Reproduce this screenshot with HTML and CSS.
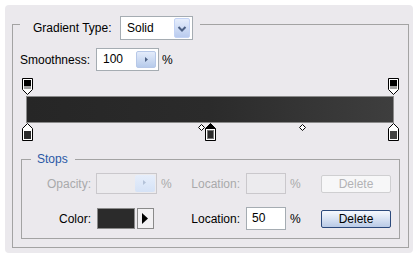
FILE: index.html
```html
<!DOCTYPE html>
<html lang="en">
<head>
  <meta charset="UTF-8">
  <title>Gradient Editor</title>
  <link rel="stylesheet" href="styles.css">
</head>
<body>
  <div class="panel">
    <div class="group">
      <div class="group-head">
        <span class="head-label">Gradient Type:</span>
        <div class="select">
          <span class="select-val">Solid</span>
          <span class="drop">
            <svg width="14" height="19" viewBox="0 0 14 19"><path d="M3.5 8 L7 11.5 L10.5 8" fill="none" stroke="#4d6185" stroke-width="2"/></svg>
          </span>
        </div>
      </div>

      <div class="smooth-row">
        <span class="smooth-label">Smoothness:</span>
        <div class="spin">
          <span class="spin-val">100</span>
          <span class="spin-btn">
            <svg width="18" height="15" viewBox="0 0 18 15"><path d="M8 5 L11 7.5 L8 10 Z" fill="#4d6185"/></svg>
          </span>
        </div>
        <span class="pct">%</span>
      </div>

      <div class="editor">
        <span class="stop top" style="--pos: 0">
          <svg width="11" height="17" viewBox="0 0 11 17"><path d="M0.5 0.5H10.5V11.5L5.5 16.5L0.5 11.5Z" fill="#fff" stroke="#000"/><rect x="2" y="2" width="7" height="6" fill="#000"/><rect x="2" y="8" width="7" height="3" fill="#a0a0a0"/></svg>
        </span>
        <span class="stop top" style="--pos: 1">
          <svg width="11" height="17" viewBox="0 0 11 17"><path d="M0.5 0.5H10.5V11.5L5.5 16.5L0.5 11.5Z" fill="#fff" stroke="#000"/><rect x="2" y="2" width="7" height="6" fill="#000"/><rect x="2" y="8" width="7" height="3" fill="#a0a0a0"/></svg>
        </span>

        <div class="bar"></div>

        <span class="stop bottom" style="--pos: 0">
          <svg width="11" height="18" viewBox="0 0 11 18"><path d="M5.5 0.5L10.5 5.5V17.5H0.5V5.5Z" fill="#fff" stroke="#000"/><rect x="2" y="8" width="7" height="8" fill="#2b2b2b"/></svg>
        </span>
        <span class="stop bottom" style="--pos: 0.5">
          <svg width="11" height="18" viewBox="0 0 11 18"><path d="M5.5 0.5L10.5 5.5V17.5H0.5V5.5Z" fill="#000" stroke="#000"/><rect x="1" y="6" width="9" height="11" fill="#fff"/><rect x="2" y="7" width="7" height="9" fill="#777"/><rect x="3" y="8" width="5" height="7" fill="#2b2b2b"/></svg>
        </span>
        <span class="stop bottom" style="--pos: 1">
          <svg width="11" height="18" viewBox="0 0 11 18"><path d="M5.5 0.5L10.5 5.5V17.5H0.5V5.5Z" fill="#fff" stroke="#000"/><rect x="2" y="8" width="7" height="8" fill="#424242"/></svg>
        </span>

        <span class="mid" style="--pos: 0.475">
          <svg width="7" height="7" viewBox="0 0 7 7"><path d="M3.5 0.5L6.5 3.5L3.5 6.5L0.5 3.5Z" fill="#fff" stroke="#000"/></svg>
        </span>
        <span class="mid" style="--pos: 0.75">
          <svg width="7" height="7" viewBox="0 0 7 7"><path d="M3.5 0.5L6.5 3.5L3.5 6.5L0.5 3.5Z" fill="#fff" stroke="#000"/></svg>
        </span>
      </div>

      <div class="stops">
        <div class="stops-head">Stops</div>
        <div class="stops-grid">
          <span class="cell-label off">Opacity:</span>
          <div class="field">
            <div class="spin off small">
              <span class="spin-val"></span>
              <span class="spin-btn">
                <svg width="18" height="15" viewBox="0 0 18 15"><path d="M8 5 L11 7.5 L8 10 Z" fill="#b4c2d8"/></svg>
              </span>
            </div>
          </div>
          <span class="cell-pct off">%</span>
          <span class="cell-label loc off">Location:</span>
          <div class="input off"></div>
          <span class="cell-pct off">%</span>
          <button class="btn" disabled>Delete</button>

          <span class="cell-label">Color:</span>
          <div class="field">
            <span class="swatch"></span>
            <span class="swatch-menu">
              <svg width="15" height="19" viewBox="0 0 15 19"><path d="M4 4 L10 9.5 L4 15 Z" fill="#000"/></svg>
            </span>
          </div>
          <span></span>
          <span class="cell-label loc">Location:</span>
          <div class="input">50</div>
          <span class="cell-pct">%</span>
          <button class="btn">Delete</button>
        </div>
      </div>
    </div>
  </div>
</body>
</html>
```

FILE: styles.css
```css
body {
  margin: 0;
  background: #ffffff;
  font-family: 'Liberation Sans', Arial, sans-serif;
  font-size: 12px;
  color: #000;
}

.panel {
  margin: 5px 0 0 5px;
  width: 408px;
  height: 248px;
  box-sizing: border-box;
  padding: 19px 0 0 7px;
  background: #ebe9ed;
  border-radius: 4px;
}

.group {
  width: 397px;
  height: 224px;
  box-sizing: border-box;
  border: 1px solid #a3a3a3;
}

.group-head {
  display: flex;
  align-items: center;
  width: fit-content;
  margin: -9px 0 0 7px;
  padding: 0 7px 0 13px;
  background: #ebe9ed;
}

.head-label {
  width: 87px;
}

.select {
  display: flex;
  align-items: center;
  width: 73px;
  height: 24px;
  box-sizing: border-box;
  padding: 1px 2px 1px 0;
  border: 1px solid #a5acb2;
  background: #fff;
}

.select-val {
  flex: 1;
  padding-left: 6px;
}

.drop {
  display: flex;
  width: 16px;
  height: 20px;
  box-sizing: border-box;
  border: 1px solid #c3d3f5;
  border-radius: 2px;
  background: linear-gradient(#e6eefc, #b9cbee);
}

.smooth-row {
  display: flex;
  align-items: center;
  margin: 8px 0 0 7px;
}

.smooth-label {
  width: 76px;
}

.spin {
  display: flex;
  width: 63px;
  height: 23px;
  box-sizing: border-box;
  padding: 2px;
  border: 1px solid #a5acb2;
  background: #fff;
}

.spin-val {
  flex: 1;
  padding-left: 4px;
  line-height: 17px;
}

.spin-btn {
  display: flex;
  width: 20px;
  box-sizing: border-box;
  border: 1px solid #b7c8e8;
  border-radius: 2px;
  background: linear-gradient(#e4ecfb, #b7cbeb);
}

.pct {
  margin-left: 3px;
}

.editor {
  position: relative;
  width: 378px;
  height: 63px;
  box-sizing: border-box;
  margin: 7px 0 0 8px;
  padding: 18px 5px 0 5px;
}

.bar {
  height: 27px;
  box-sizing: border-box;
  border: 1px solid #8a8a8a;
  background: linear-gradient(to right, #262626, #2b2b2b 50%, #3e3e3e);
}

.stop {
  position: absolute;
  left: calc(1px + (100% - 12px) * var(--pos));
  display: flex;
}

.stop.top {
  top: 0;
}

.stop.bottom {
  top: 45px;
}

.mid {
  position: absolute;
  left: calc(3px + (100% - 12px) * var(--pos));
  top: 46px;
  display: flex;
}

.stops {
  width: 379px;
  height: 80px;
  box-sizing: border-box;
  margin: 18px 0 0 8px;
  border: 1px solid #a3a3a3;
}

.stops-head {
  width: fit-content;
  margin: -8px 0 0 9px;
  padding: 0 7px 0 6px;
  line-height: 14px;
  color: #2a58a6;
  background: #ebe9ed;
}

.stops-grid {
  display: grid;
  grid-template-columns: 74px 61px 22px 67px 40px 35px 70px;
  grid-auto-rows: 23px;
  row-gap: 12px;
  align-items: center;
  margin-top: 6px;
}

.cell-label {
  text-align: right;
  padding-right: 5px;
}

.cell-label.loc {
  padding-right: 6px;
}

.cell-pct {
  padding-left: 4px;
}

.off {
  color: #a9a9ab;
}

.field {
  display: flex;
  align-items: center;
}

.spin.off {
  width: 61px;
  height: 21px;
  padding: 1px;
  border-color: #cac8cc;
  background: #ecebee;
}

.spin.off .spin-btn {
  border: none;
  background: linear-gradient(#e6eefb, #d5e2f6);
}

.input {
  height: 23px;
  box-sizing: border-box;
  padding-left: 5px;
  line-height: 21px;
  border: 1px solid #a5acb2;
  background: #fff;
}

.input.off {
  height: 21px;
  border-color: #cac8cc;
  background: #ecebee;
}

.swatch {
  width: 38px;
  height: 21px;
  margin-left: 1px;
  box-sizing: border-box;
  border: 1px solid #8a8a8a;
  background: #2b2b2b;
}

.swatch-menu {
  display: flex;
  width: 17px;
  height: 21px;
  margin-left: 2px;
  box-sizing: border-box;
  border: 1px solid #8a8a8a;
  background: #f2f1f3;
}

.btn {
  height: 18px;
  padding: 0;
  font-family: inherit;
  font-size: 12px;
  color: #000;
  border: 1px solid #2c4a7c;
  border-radius: 2px;
  background: linear-gradient(#f6f9fe, #dbe5f4 45%, #b9cae6);
}

.btn:disabled {
  color: #b3b3b5;
  border-color: #cfcfd1;
  background: #f7f7f8;
}
```
